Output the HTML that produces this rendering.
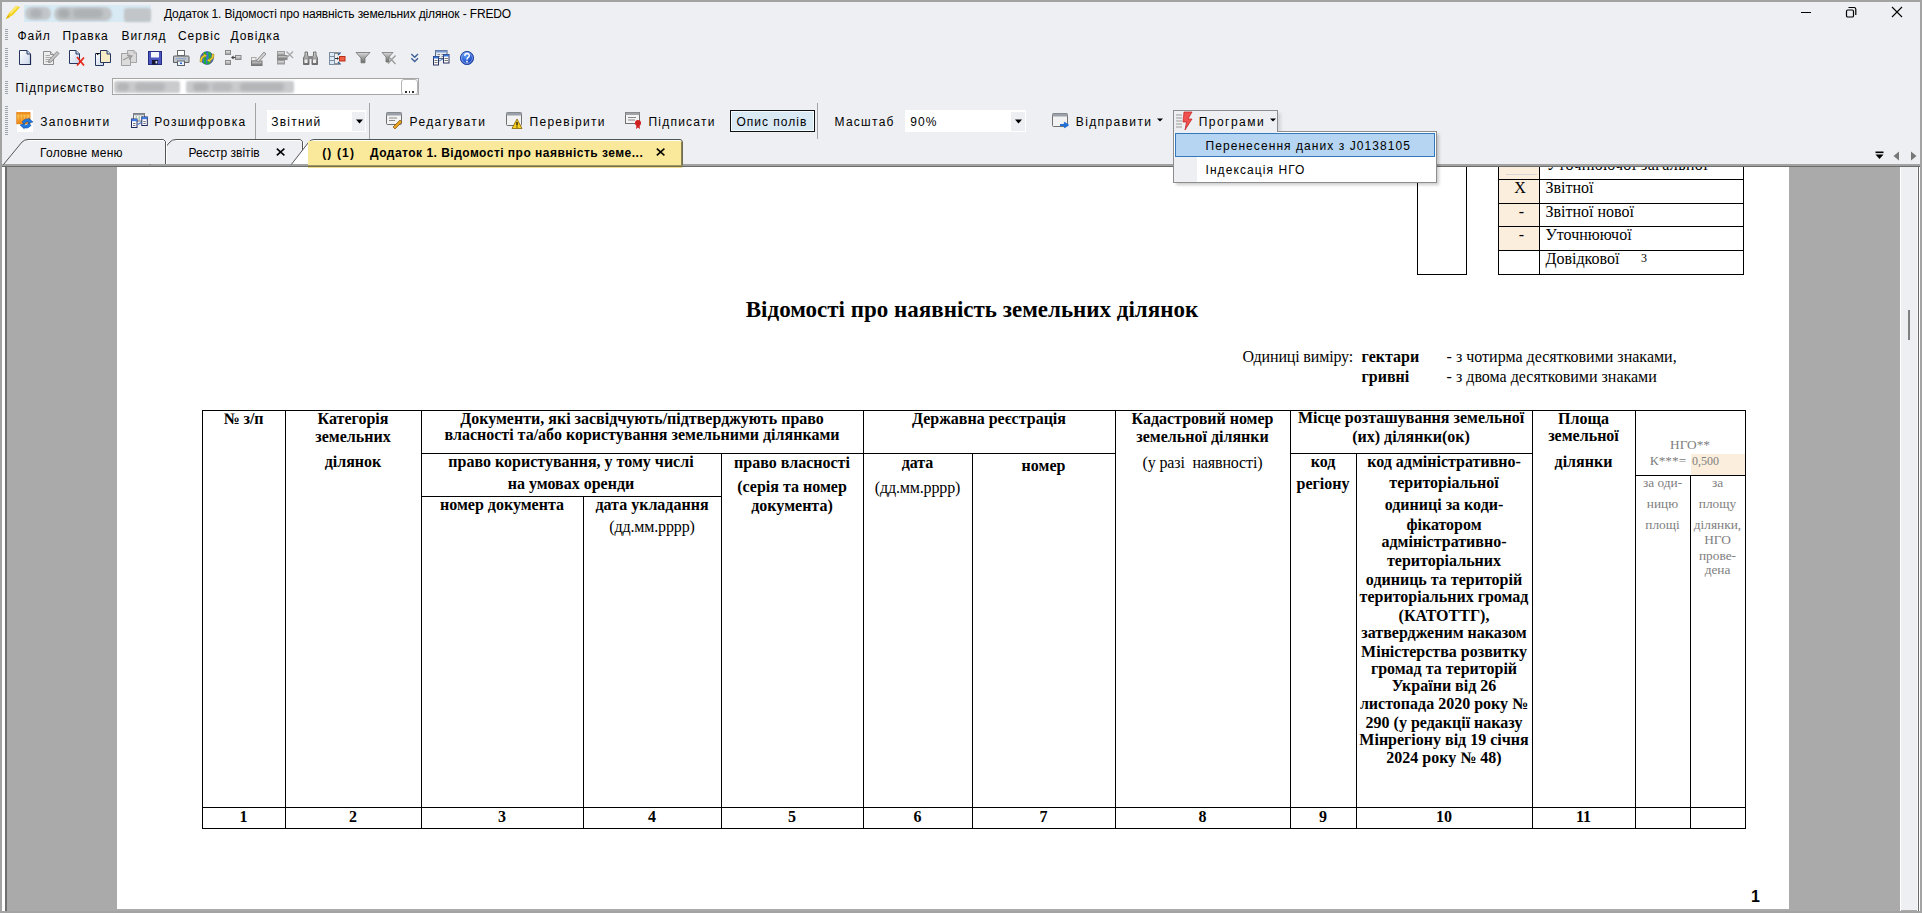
<!DOCTYPE html>
<html><head><meta charset="utf-8"><style>
html,body{margin:0;padding:0;width:1922px;height:913px;overflow:hidden;background:#eeeff2}
.r{position:absolute;box-sizing:border-box}
svg.r{overflow:visible}
.t{position:absolute;white-space:nowrap;line-height:1}
.clip{position:absolute;left:0;top:0;width:1922px;height:913px;clip-path:inset(167px 2px 4px 117px)}
</style></head><body>
<div class="r" style="left:0px;top:0px;width:1922px;height:913px;background:#eeeff2"></div>
<svg class="r" style="left:4px;top:4px;" width="17" height="17" viewBox="0 0 17 17"><path d="M2 15 L5 9 L12 2 L16 3 L9 11 Z" fill="#f2d21a"/><path d="M2 15 L6 13 L4 11 Z" fill="#e0b000"/><path d="M5 9 L12 2 L14 3 L7 10Z" fill="#ffe870"/></svg>
<div class="r" style="left:24px;top:5px;width:127px;height:17px;background:#d8ebf5"></div>
<div class="r" style="left:25px;top:7px;width:26px;height:13px;background:#c2c6c9;border-radius:6px;filter:blur(1.2px)"></div>
<div class="r" style="left:54px;top:6.5px;width:58px;height:14.5px;background:#c0c4c7;border-radius:7px;filter:blur(1.2px)"></div>
<div class="r" style="left:30px;top:9px;width:12px;height:9px;background:#aeb2b5;border-radius:5px;filter:blur(1.5px)"></div>
<div class="r" style="left:58px;top:9px;width:12px;height:9px;background:#a9adb0;border-radius:5px;filter:blur(1.5px)"></div>
<div class="r" style="left:73px;top:9px;width:30px;height:9px;background:#aeb2b5;border-radius:5px;filter:blur(1.5px)"></div>
<div class="r" style="left:124px;top:8px;width:27px;height:14px;background:#c2c6c8;border-radius:3px;filter:blur(1px)"></div>
<div class="t" style="left:164px;top:8.34px;font-size:12px;font-weight:400;color:#000;letter-spacing:-0.14px;font-family:'Liberation Sans', sans-serif;">Додаток 1. Відомості про наявність земельних ділянок - FREDO</div>
<div class="r" style="left:1801px;top:12px;width:10px;height:1px;background:#000"></div>
<svg class="r" style="left:1844px;top:6px;" width="14" height="13" viewBox="0 0 14 13"><rect x="2.5" y="4" width="7" height="7" rx="1.3" fill="none" stroke="#000" stroke-width="1.2"/><path d="M4.5 1.5 H10 Q11.8 1.5 11.8 3.3 V9" fill="none" stroke="#000" stroke-width="1.2"/></svg>
<svg class="r" style="left:1891px;top:6px;" width="12" height="12" viewBox="0 0 12 12"><path d="M1 1 L11 11 M11 1 L1 11" stroke="#000" stroke-width="1.1"/></svg>
<div class="r" style="left:5px;top:29px;width:3px;height:1px;background:#a0a4ac"></div>
<div class="r" style="left:5px;top:31px;width:3px;height:1px;background:#a0a4ac"></div>
<div class="r" style="left:5px;top:33px;width:3px;height:1px;background:#a0a4ac"></div>
<div class="r" style="left:5px;top:35px;width:3px;height:1px;background:#a0a4ac"></div>
<div class="r" style="left:5px;top:37px;width:3px;height:1px;background:#a0a4ac"></div>
<div class="r" style="left:5px;top:39px;width:3px;height:1px;background:#a0a4ac"></div>
<div class="r" style="left:5px;top:48px;width:3px;height:1px;background:#a0a4ac"></div>
<div class="r" style="left:5px;top:50px;width:3px;height:1px;background:#a0a4ac"></div>
<div class="r" style="left:5px;top:52px;width:3px;height:1px;background:#a0a4ac"></div>
<div class="r" style="left:5px;top:54px;width:3px;height:1px;background:#a0a4ac"></div>
<div class="r" style="left:5px;top:56px;width:3px;height:1px;background:#a0a4ac"></div>
<div class="r" style="left:5px;top:58px;width:3px;height:1px;background:#a0a4ac"></div>
<div class="r" style="left:5px;top:60px;width:3px;height:1px;background:#a0a4ac"></div>
<div class="r" style="left:5px;top:62px;width:3px;height:1px;background:#a0a4ac"></div>
<div class="r" style="left:5px;top:64px;width:3px;height:1px;background:#a0a4ac"></div>
<div class="r" style="left:5px;top:66px;width:3px;height:1px;background:#a0a4ac"></div>
<div class="r" style="left:5px;top:81px;width:3px;height:1px;background:#a0a4ac"></div>
<div class="r" style="left:5px;top:83px;width:3px;height:1px;background:#a0a4ac"></div>
<div class="r" style="left:5px;top:85px;width:3px;height:1px;background:#a0a4ac"></div>
<div class="r" style="left:5px;top:87px;width:3px;height:1px;background:#a0a4ac"></div>
<div class="r" style="left:5px;top:89px;width:3px;height:1px;background:#a0a4ac"></div>
<div class="r" style="left:5px;top:91px;width:3px;height:1px;background:#a0a4ac"></div>
<div class="r" style="left:5px;top:93px;width:3px;height:1px;background:#a0a4ac"></div>
<div class="r" style="left:5px;top:106px;width:3px;height:1px;background:#a0a4ac"></div>
<div class="r" style="left:5px;top:108px;width:3px;height:1px;background:#a0a4ac"></div>
<div class="r" style="left:5px;top:110px;width:3px;height:1px;background:#a0a4ac"></div>
<div class="r" style="left:5px;top:112px;width:3px;height:1px;background:#a0a4ac"></div>
<div class="r" style="left:5px;top:114px;width:3px;height:1px;background:#a0a4ac"></div>
<div class="r" style="left:5px;top:116px;width:3px;height:1px;background:#a0a4ac"></div>
<div class="r" style="left:5px;top:118px;width:3px;height:1px;background:#a0a4ac"></div>
<div class="r" style="left:5px;top:120px;width:3px;height:1px;background:#a0a4ac"></div>
<div class="r" style="left:5px;top:122px;width:3px;height:1px;background:#a0a4ac"></div>
<div class="r" style="left:5px;top:124px;width:3px;height:1px;background:#a0a4ac"></div>
<div class="r" style="left:5px;top:126px;width:3px;height:1px;background:#a0a4ac"></div>
<div class="r" style="left:5px;top:128px;width:3px;height:1px;background:#a0a4ac"></div>
<div class="r" style="left:5px;top:130px;width:3px;height:1px;background:#a0a4ac"></div>
<div class="r" style="left:5px;top:132px;width:3px;height:1px;background:#a0a4ac"></div>
<div class="r" style="left:5px;top:134px;width:3px;height:1px;background:#a0a4ac"></div>
<div class="t" style="left:17.5px;top:30.24px;font-size:12px;font-weight:400;color:#000;letter-spacing:0.95px;font-family:'Liberation Sans', sans-serif;">Файл</div>
<div class="t" style="left:62.5px;top:30.24px;font-size:12px;font-weight:400;color:#000;letter-spacing:0.95px;font-family:'Liberation Sans', sans-serif;">Правка</div>
<div class="t" style="left:121.5px;top:30.24px;font-size:12px;font-weight:400;color:#000;letter-spacing:0.95px;font-family:'Liberation Sans', sans-serif;">Вигляд</div>
<div class="t" style="left:178.0px;top:30.24px;font-size:12px;font-weight:400;color:#000;letter-spacing:0.95px;font-family:'Liberation Sans', sans-serif;">Сервіс</div>
<div class="t" style="left:230.5px;top:30.24px;font-size:12px;font-weight:400;color:#000;letter-spacing:0.95px;font-family:'Liberation Sans', sans-serif;">Довідка</div>
<svg class="r" style="left:0px;top:0px;" width="480" height="72" viewBox="0 0 480 72"><defs><linearGradient id="gd" x1="0" y1="0" x2="1" y2="1"><stop offset="0" stop-color="#fff"/><stop offset="1" stop-color="#c9d6ea"/></linearGradient><linearGradient id="gg" x1="0" y1="0" x2="0" y2="1"><stop offset="0" stop-color="#e8e8e8"/><stop offset="1" stop-color="#9a9a9a"/></linearGradient><linearGradient id="gf" x1="0" y1="0" x2="0" y2="1"><stop offset="0" stop-color="#d8d8d8"/><stop offset="1" stop-color="#6a6a6a"/></linearGradient></defs><path d="M19.5 50.5 H27.0 L30.5 54.0 V64.5 H19.5 Z" fill="url(#gd)" stroke="#27365f" stroke-width="1"/><path d="M27.0 50.5 V54.0 H30.5" fill="#c8dcf0" stroke="#27365f" stroke-width="1"/><path d="M20 64.5 H30.5 V55" stroke="#1c2850" stroke-width="1.2" fill="none"/><path d="M43.5 51.5 H50.5 L53.5 54.5 V64.5 H43.5 Z" fill="#eeeeee" stroke="#8c8c8c" stroke-width="1"/><path d="M50.5 51.5 V54.5 H53.5" fill="#ddd" stroke="#8c8c8c" stroke-width="1"/><path d="M45.5 55.5H50M45.5 57.5H51M45.5 59.5H49M45.5 61.5H50" stroke="#aaa" stroke-width="1"/><path d="M49 60 L57 51.5 L59 53.5 L51 62 L48.5 62.5Z" fill="#c4c4c4" stroke="#7c7c7c" stroke-width=".8"/><path d="M69.5 50.5 H76.0 L79.5 54.0 V63.5 H69.5 Z" fill="url(#gd)" stroke="#27365f" stroke-width="1"/><path d="M76.0 50.5 V54.0 H79.5" fill="#c8dcf0" stroke="#27365f" stroke-width="1"/><path d="M77 57 L84 65.5 M84 57.5 L77 65.5" stroke="#e8281a" stroke-width="1.8"/><path d="M95.5 53.5 H101.5 L103.5 55.5 V65.5 H95.5 Z" fill="url(#gd)" stroke="#27365f" stroke-width="1"/><path d="M101.5 53.5 V55.5 H103.5" fill="#c8dcf0" stroke="#27365f" stroke-width="1"/><path d="M96 53 H99.5 L97.7 55.3Z" fill="#000"/><path d="M100.5 50.5 H107.0 L110.5 54.0 V62.5 H100.5 Z" fill="#f8ecc6" stroke="#27365f" stroke-width="1"/><path d="M107.0 50.5 V54.0 H110.5" fill="#c8dcf0" stroke="#27365f" stroke-width="1"/><path d="M127.5 50.5 H134.0 L136.5 53.0 V62.5 H127.5 Z" fill="#d9d9d9" stroke="#a6a6a6" stroke-width="1"/><path d="M134.0 50.5 V53.0 H136.5" fill="#eee" stroke="#a6a6a6" stroke-width="1"/><path d="M121.5 53.5 H128.0 L130.5 56.0 V65.5 H121.5 Z" fill="#dcdcdc" stroke="#a0a0a0" stroke-width="1"/><path d="M128.0 53.5 V56.0 H130.5" fill="#eee" stroke="#a0a0a0" stroke-width="1"/><path d="M123 60 L131 56 M127 55.5 L132 56 L129 59.5" stroke="#9a9a9a" stroke-width="1.2" fill="none"/><rect x="148.5" y="51.5" width="13" height="13" fill="#4a55c0" stroke="#262d80"/><rect x="151" y="52" width="8" height="5.5" fill="#f4f6fb"/><rect x="152" y="60" width="6" height="4.5" fill="#151530"/><rect x="155.5" y="61" width="1.8" height="2.5" fill="#c8d8f0"/><rect x="177.5" y="50.5" width="7" height="5" fill="#fff" stroke="#6a6a6a"/><path d="M174 56 H188.5 Q189 56 189 57 V62.5 H173.5 V57 Q173.5 56 174 56Z" fill="#bfc2c6" stroke="#5e6266"/><rect x="177.5" y="61" width="7" height="4.5" fill="#eaf4ff" stroke="#5e6266"/><rect x="180" y="62.5" width="2" height="1.5" fill="#2a6ad0"/><rect x="176" y="58" width="10" height="1.2" fill="#8ea8d0"/><circle cx="207" cy="58" r="6.3" fill="#3a78d0" stroke="#1a3a80" stroke-width=".8"/><path d="M205 52 V64 M209 52 Q211 58 208 64" stroke="#1fb030" stroke-width="2.2" fill="none"/><path d="M200 62 Q199.5 57 204 55 L203 53.5 L207 55.5 L204 58 L204.5 56.5 Q201.5 58.5 202 62Z" fill="#f0d030" stroke="#a08010" stroke-width=".5"/><path d="M214 54 Q214.5 59 210 61 L211 62.5 L207 60.5 L210 58 L209.5 59.5 Q212.5 57.5 212 54Z" fill="#f0d030" stroke="#a08010" stroke-width=".5"/><rect x="225.5" y="50.5" width="5" height="4" fill="url(#gg)" stroke="#8a8a8a"/><rect x="225.5" y="60.5" width="5" height="4" fill="url(#gg)" stroke="#8a8a8a"/><rect x="235.5" y="55.5" width="5.5" height="4" fill="url(#gg)" stroke="#8a8a8a"/><path d="M233 57.5 H235.5" stroke="#444" stroke-width="1.2"/><path d="M231 57.5 L233.5 55.5 V59.5Z" fill="#444"/><rect x="251.5" y="57.5" width="4.5" height="3.5" fill="#eee" stroke="#aaa"/><rect x="251.5" y="61" width="10.5" height="4.5" fill="url(#gf)" stroke="#777"/><path d="M256.5 60.5 L264 52 L266 54 L258.5 62Z" fill="#cfcfcf" stroke="#7a7a7a" stroke-width=".8"/><rect x="277.5" y="51.5" width="7" height="3.5" fill="url(#gg)" stroke="#9a9a9a"/><rect x="277.5" y="55.5" width="9.5" height="4" fill="url(#gf)" stroke="#888"/><rect x="277.5" y="60.5" width="7" height="3.5" fill="url(#gg)" stroke="#9a9a9a"/><path d="M286.5 51.5 L293 58 M293 51.5 L287 57.5" stroke="#a8a8a8" stroke-width="1.3"/><path d="M303.5 58 L305 55 V52 H307.5 V55 L309 58 V64.5 H303.5Z" fill="url(#gf)" stroke="#666" stroke-width=".9"/><path d="M312 58 L313.5 55 V52 H316 V55 L317.5 58 V64.5 H312Z" fill="url(#gf)" stroke="#666" stroke-width=".9"/><rect x="309" y="56" width="3" height="3" fill="#888"/><rect x="304.5" y="59.5" width="3" height="3.5" fill="#eee"/><rect x="313" y="59.5" width="3" height="3.5" fill="#eee"/><rect x="329.5" y="52.5" width="5" height="12" fill="#dce9f5" stroke="#7d8da0"/><path d="M329.5 56.5H334.5M329.5 60.5H334.5" stroke="#7d8da0"/><path d="M335 53 H339 M335 64 H339" stroke="#333" stroke-width="1"/><path d="M340.5 52.5 L338 55 M340.5 64.5 L338 62" stroke="#2a5a90" stroke-width="1.4"/><path d="M335 58.5 H338" stroke="#333" stroke-width="1"/><path d="M339 58.5 L337 57 V60Z" fill="#333"/><rect x="339.5" y="56.5" width="5.5" height="4.5" fill="#f06048" stroke="#b83018"/><path d="M356 52.5 H370 L365 58 V62.8 H361 V58Z" fill="url(#gf)" stroke="#707070" stroke-width=".8"/><path d="M382 52.5 H393 L389 57 V62 H386 V57Z" fill="url(#gf)" stroke="#777" stroke-width=".8"/><path d="M388 56 L395.5 64 M395.5 55.5 L388 63.5" stroke="#9a9a9a" stroke-width="1.3"/><path d="M411.3 54 L414.7 57.2 L418 54 M411.3 58.3 L414.7 61.5 L418 58.3" stroke="#3d5f98" stroke-width="1.4" fill="none"/><rect x="435.5" y="50.5" width="11.5" height="8" fill="#e6ebf2" stroke="#55657e"/><rect x="435.5" y="50.5" width="11.5" height="2" fill="#7a9ad0"/><path d="M437.5 54.5H440M441.5 54.5H444M437.5 56.5H440M441.5 56.5H444" stroke="#888"/><rect x="433.5" y="56.5" width="5" height="8.5" fill="#fff" stroke="#2a3360"/><rect x="433.5" y="56.5" width="5" height="2" fill="#3a78d8"/><rect x="443.5" y="54.5" width="5.5" height="8.5" fill="#fff" stroke="#2a3360"/><rect x="443.5" y="54.5" width="5.5" height="2" fill="#3a78d8"/><path d="M434.5 60.5H437.5M434.5 62.5H437.5M444.5 58.5H448M444.5 60.5H448" stroke="#777"/><path d="M439 61 L443 59" stroke="#4a80c8" stroke-width="1"/><defs><radialGradient id="hg" cx=".4" cy=".35" r=".7"><stop offset="0" stop-color="#5a9af8"/><stop offset="1" stop-color="#0a2fb0"/></radialGradient></defs><circle cx="467" cy="58" r="6.6" fill="url(#hg)" stroke="#2a4aa0" stroke-width="1"/><circle cx="467" cy="58" r="5.4" fill="none" stroke="#b8d0ff" stroke-width=".6"/><path d="M464.7 55.8 Q465 53.6 467.1 53.6 Q469.4 53.7 469.3 55.7 Q469.2 57 467.6 57.8 Q467 58.2 467 59.6" stroke="#fff" stroke-width="1.5" fill="none"/><rect x="466.2" y="60.8" width="1.6" height="1.6" fill="#fff"/></svg>
<div class="t" style="left:15.5px;top:81.84px;font-size:12px;font-weight:400;color:#000;letter-spacing:1.05px;font-family:'Liberation Sans', sans-serif;">Підприємство</div>
<div class="r" style="left:112px;top:78px;width:307px;height:17px;background:#fff;border:1px solid #a6a6a6"></div>
<div class="r" style="left:114px;top:81px;width:66px;height:12px;background:#c9cbcd;border-radius:2px;filter:blur(1px)"></div>
<div class="r" style="left:186px;top:81px;width:108px;height:12px;background:#c9cbcd;border-radius:2px;filter:blur(1px)"></div>
<div class="r" style="left:117px;top:83px;width:12px;height:8px;background:#b3b5b7;border-radius:4px;filter:blur(1.5px)"></div>
<div class="r" style="left:135px;top:83px;width:30px;height:8px;background:#b5b7b9;border-radius:4px;filter:blur(1.5px)"></div>
<div class="r" style="left:193px;top:83px;width:16px;height:8px;background:#b0b2b4;border-radius:4px;filter:blur(1.5px)"></div>
<div class="r" style="left:212px;top:83px;width:20px;height:8px;background:#b8babc;border-radius:4px;filter:blur(1.5px)"></div>
<div class="r" style="left:240px;top:83px;width:44px;height:8px;background:#b3b5b7;border-radius:4px;filter:blur(1.5px)"></div>
<div class="r" style="left:401px;top:79px;width:17px;height:16px;background:#fff;border:1px solid #b4b4b4;border-radius:3px"></div>
<div class="r" style="left:405px;top:91px;width:1.5px;height:1.5px;background:#333"></div>
<div class="r" style="left:408.5px;top:91px;width:1.5px;height:1.5px;background:#333"></div>
<div class="r" style="left:412px;top:91px;width:1.5px;height:1.5px;background:#333"></div>
<div class="r" style="left:255px;top:103px;width:1px;height:36px;background:#a4a4a4"></div>
<div class="r" style="left:369px;top:103px;width:1px;height:36px;background:#a4a4a4"></div>
<div class="r" style="left:817px;top:103px;width:1px;height:36px;background:#a4a4a4"></div>
<div class="r" style="left:17px;top:110px;width:16px;height:22px;background:#fff"></div>
<svg class="r" style="left:12px;top:106px;" width="24" height="30" viewBox="0 0 24 30"><defs><linearGradient id="zo" x1="0" y1="0" x2="0" y2="1"><stop offset="0" stop-color="#fde070"/><stop offset="1" stop-color="#f08010"/></linearGradient></defs><rect x="4.8" y="6.5" width="13.2" height="11.3" fill="url(#zo)" stroke="#e07a10" stroke-width=".8"/><rect x="4.8" y="6.5" width="13.2" height="2.2" fill="#f09020"/><path d="M8 9V17.5M11 9V17.5M14 9V17.5" stroke="#e8901a" stroke-width="1"/><path d="M10 16 Q13 11.5 17.5 13.5 L16.5 12 L21 16 L16 17.5 L17 16 Q13.5 15 12 18Z" fill="#1e78e0" stroke="#0a4aa0" stroke-width=".5"/><path d="M19 19.5 Q16 23.5 11.5 21.5 L12.5 23 L8 19 L13 17.5 L12 19 Q15.5 20 17 17Z" fill="#1e78e0" stroke="#0a4aa0" stroke-width=".5"/></svg>
<div class="t" style="left:40.3px;top:115.84px;font-size:12px;font-weight:400;color:#000;letter-spacing:1.25px;font-family:'Liberation Sans', sans-serif;">Заповнити</div>
<svg class="r" style="left:125px;top:106px;" width="30" height="30" viewBox="0 0 30 30"><rect x="8.5" y="7.5" width="11" height="7.5" fill="#f6f8fa" stroke="#707478"/><rect x="8.5" y="7.5" width="11" height="1.8" fill="#8a9098"/><path d="M10.5 11H12M13.5 11H15M16.5 11H18M13.5 13H15" stroke="#6a9a6a" stroke-width="1"/><rect x="6.5" y="13" width="5.5" height="8.5" fill="#fff" stroke="#1f2a60"/><rect x="6.5" y="13" width="5.5" height="2.2" fill="#3f78e0"/><path d="M8 17.5H10.5M8 19.5H10.5" stroke="#778"/><rect x="16.8" y="11" width="5.5" height="8.5" fill="#fff" stroke="#1f2a60"/><rect x="16.8" y="11" width="5.5" height="2.2" fill="#3f78e0"/><path d="M18.3 15.5H20.8M18.3 17.5H20.8" stroke="#778"/><path d="M12.5 18.5 L16.5 16.5" stroke="#3a70c8" stroke-width="1.2"/></svg>
<div class="t" style="left:154.3px;top:115.84px;font-size:12px;font-weight:400;color:#000;letter-spacing:1.33px;font-family:'Liberation Sans', sans-serif;">Розшифровка</div>
<div class="r" style="left:267px;top:110px;width:99px;height:22px;background:#fff"></div>
<div class="r" style="left:352px;top:112px;width:13px;height:19px;background:#eeeff2"></div>
<svg class="r" style="left:355px;top:118.5px;" width="9" height="6" viewBox="0 0 9 6"><path d="M1 0.5 H8 L4.5 4.5Z" fill="#000"/></svg>
<div class="t" style="left:271.3px;top:115.84px;font-size:12px;font-weight:400;color:#000;letter-spacing:1.2px;font-family:'Liberation Sans', sans-serif;">Звітний</div>
<svg class="r" style="left:386px;top:112px;" width="16" height="17" viewBox="0 0 16 17"><rect x="0.5" y="0.5" width="15" height="12" rx="1" fill="#f2f2f2" stroke="#707070"/><rect x="0.5" y="0.5" width="15" height="3" fill="#9aa0a8"/><path d="M3 6H11M3 8.5H9" stroke="#888"/><path d="M7 15 L14 8 L16 10 L9 17Z" fill="#e8a020" stroke="#805010" stroke-width=".7"/></svg>
<div class="t" style="left:409.5px;top:115.84px;font-size:12px;font-weight:400;color:#000;letter-spacing:1.4px;font-family:'Liberation Sans', sans-serif;">Редагувати</div>
<svg class="r" style="left:506px;top:112px;" width="16" height="17" viewBox="0 0 16 17"><rect x="0.5" y="0.5" width="15" height="13" rx="1" fill="#f2f2f2" stroke="#707070"/><rect x="0.5" y="0.5" width="15" height="3" fill="#9aa0a8"/><path d="M11 7 L16 16.5 H6Z" fill="#f8d020" stroke="#806000" stroke-width=".8"/><path d="M11 10V13.5M11 14.5V15.5" stroke="#000" stroke-width="1.2"/></svg>
<div class="t" style="left:529.5px;top:115.84px;font-size:12px;font-weight:400;color:#000;letter-spacing:1.3px;font-family:'Liberation Sans', sans-serif;">Перевірити</div>
<svg class="r" style="left:625px;top:112px;" width="17" height="17" viewBox="0 0 17 17"><rect x="0.5" y="0.5" width="14" height="11" fill="#f4f4f4" stroke="#707070"/><rect x="0.5" y="0.5" width="14" height="2.5" fill="#a0a4a8"/><path d="M3 5.5H11M3 8H10" stroke="#888"/><circle cx="13" cy="11" r="3" fill="#d02020"/><path d="M11.5 13 L11 17 L13 15.5 L15 17 L14.5 13Z" fill="#d02020"/></svg>
<div class="t" style="left:648.5px;top:115.84px;font-size:12px;font-weight:400;color:#000;letter-spacing:1.22px;font-family:'Liberation Sans', sans-serif;">Підписати</div>
<div class="r" style="left:730px;top:110px;width:85px;height:22px;background:#d9eaf5;border:1px solid #111;box-shadow:inset 0 0 0 1px #f4fbff;box-sizing:border-box"></div>
<div class="t" style="left:736.5px;top:115.84px;font-size:12px;font-weight:400;color:#000;letter-spacing:1.0px;font-family:'Liberation Sans', sans-serif;">Опис полів</div>
<div class="t" style="left:834.5px;top:115.84px;font-size:12px;font-weight:400;color:#000;letter-spacing:1.27px;font-family:'Liberation Sans', sans-serif;">Масштаб</div>
<div class="r" style="left:905px;top:110px;width:121px;height:22px;background:#fff"></div>
<div class="r" style="left:1011px;top:112px;width:14px;height:19px;background:#eeeff2"></div>
<svg class="r" style="left:1014px;top:118.5px;" width="9" height="6" viewBox="0 0 9 6"><path d="M1 0.5 H8 L4.5 4.5Z" fill="#000"/></svg>
<div class="t" style="left:910.3px;top:115.84px;font-size:12px;font-weight:400;color:#000;letter-spacing:1.1px;font-family:'Liberation Sans', sans-serif;">90%</div>
<svg class="r" style="left:1052px;top:113px;" width="18" height="17" viewBox="0 0 18 17"><rect x="0.5" y="0.5" width="15" height="13" rx="1" fill="#f2f2f2" stroke="#707070"/><rect x="0.5" y="0.5" width="15" height="3" fill="#9aa0a8"/><path d="M8 12 H14 M12 9.5 L15.5 12 L12 14.5" stroke="#2070d8" stroke-width="2" fill="none"/></svg>
<div class="t" style="left:1075.8px;top:115.84px;font-size:12px;font-weight:400;color:#000;letter-spacing:1.38px;font-family:'Liberation Sans', sans-serif;">Відправити</div>
<svg class="r" style="left:1157px;top:118px;" width="6" height="4" viewBox="0 0 6 4"><path d="M0 0.5H6L3 3.5Z" fill="#000"/></svg>
<div class="r" style="left:1176px;top:113px;width:105px;height:22px;background:rgba(0,0,0,.10);filter:blur(1.5px)"></div>
<div class="r" style="left:1173px;top:110px;width:105px;height:23px;background:#eeeff2;border:1px solid #8d8d8d;border-bottom:none;box-sizing:border-box"></div>
<svg class="r" style="left:1175px;top:111px;" width="19" height="20" viewBox="0 0 19 20"><path d="M1 4H7M1 7H7M1 10H7M1 13H7M1 16H7" stroke="#b8b8b8" stroke-width="1.6"/><path d="M9 1 L17 1 L13 8 L17 8 L10 19 L11.5 11 L8 11Z" fill="#f05050" stroke="#c02020" stroke-width=".7"/></svg>
<div class="t" style="left:1198.8px;top:115.84px;font-size:12px;font-weight:400;color:#000;letter-spacing:1.45px;font-family:'Liberation Sans', sans-serif;">Програми</div>
<svg class="r" style="left:1270px;top:118px;" width="6" height="4" viewBox="0 0 6 4"><path d="M0 0.5H6L3 3.5Z" fill="#000"/></svg>
<div class="r" style="left:2px;top:167px;width:1918px;height:744px;background:#a9aaa9"></div>
<div class="r" style="left:2px;top:166px;width:3px;height:745px;background:#fff"></div>
<div class="r" style="left:5px;top:166px;width:1.5px;height:745px;background:#6e6e6e"></div>
<div class="r" style="left:117px;top:167px;width:1672px;height:742px;background:#fff"></div>
<div class="r" style="left:1900px;top:167px;width:1px;height:744px;background:#fff"></div>
<div class="r" style="left:1901px;top:167px;width:16px;height:743px;background:#eeeff2"></div>
<div class="r" style="left:1917px;top:167px;width:1px;height:744px;background:#f8f8f8"></div>
<div class="r" style="left:1918px;top:167px;width:1px;height:744px;background:#6a6a6a"></div>
<div class="r" style="left:1919px;top:167px;width:1px;height:744px;background:#fff"></div>
<div class="r" style="left:1908px;top:310px;width:2px;height:30px;background:#808080"></div>
<div class="r" style="left:0px;top:0px;width:1922px;height:2px;background:#a3a3a3"></div>
<div class="r" style="left:0px;top:0px;width:2px;height:913px;background:#a3a3a3"></div>
<div class="r" style="left:1920px;top:0px;width:2px;height:913px;background:#a3a3a3"></div>
<div class="r" style="left:0px;top:911px;width:1922px;height:2px;background:#a3a3a3"></div>
<div class="r" style="left:2px;top:164px;width:1918px;height:2px;background:#a2a2a2"></div>
<svg class="r" style="left:0px;top:134px;" width="700" height="40" viewBox="0 0 700 40"><path d="M150.4 30 L170 8 Q172 5.5 176 5.5 H300.5 L302.5 7.5 V30 Z" fill="#eeeff2"/><path d="M150 30.5 L170 8 Q172 5.5 176 5.5 H300.5 L302.5 7.5 V30" fill="none" stroke="#555" stroke-width="1"/><path d="M176 6.5 H300" stroke="#fff" stroke-width="1"/><path d="M303.5 8 V30" stroke="#fff" stroke-width="1"/><path d="M3.9 30 L22 8 Q24.5 5.5 28 5.5 H163.5 L165.5 7.5 V30 Z" fill="#eeeff2"/><path d="M3.5 30.5 L22 8 Q24.5 5.5 28 5.5 H163.5 L165.5 7.5 V30" fill="none" stroke="#555" stroke-width="1"/><path d="M28 6.5 H163" stroke="#fff" stroke-width="1"/><path d="M166.5 8 V30" stroke="#fff" stroke-width="1"/><path d="M291.7 30 L309 7.8 Q311 5.5 314 5.5 H680 Q682.2 5.5 682.2 7.8 V30 Z" fill="#fff"/><path d="M291.3 30.5 L309 7.8 Q311 5.5 314 5.5 H680 Q682.2 5.5 682.2 7.8 V30" fill="none" stroke="#555" stroke-width="1"/><rect x="308" y="7" width="374" height="27" fill="#fbe99b"/><path d="M682 7.5 V31" stroke="#6b6843" stroke-width="1.6"/><rect x="308" y="31.3" width="375" height="1.8" fill="#77714a"/></svg>
<div class="r" style="left:2px;top:166px;width:306px;height:1px;background:#6b6d6b"></div>
<div class="r" style="left:683px;top:166px;width:1237px;height:1px;background:#6b6d6b"></div>
<div class="t" style="left:40px;top:146.84px;font-size:12px;font-weight:400;color:#000;letter-spacing:0.28px;font-family:'Liberation Sans', sans-serif;">Головне меню</div>
<div class="t" style="left:188.6px;top:146.84px;font-size:12px;font-weight:400;color:#000;letter-spacing:0.02px;font-family:'Liberation Sans', sans-serif;">Реєстр звітів</div>
<svg class="r" style="left:268px;top:142px;" width="24" height="20" viewBox="0 0 24 20"><path d="M8.8 6.6 L16.4 13.4 M16.4 6.6 L8.8 13.4" stroke="#000" stroke-width="1.5"/></svg>
<div class="t" style="left:322.2px;top:146.84px;font-size:12px;font-weight:700;color:#000;letter-spacing:1.15px;font-family:'Liberation Sans', sans-serif;">() (1)</div>
<div class="t" style="left:370px;top:146.84px;font-size:12px;font-weight:700;color:#000;letter-spacing:0.48px;font-family:'Liberation Sans', sans-serif;">Додаток 1. Відомості про наявність земе...</div>
<svg class="r" style="left:648px;top:142px;" width="24" height="20" viewBox="0 0 24 20"><path d="M8.8 6.6 L16.4 13.4 M16.4 6.6 L8.8 13.4" stroke="#000" stroke-width="1.5"/></svg>
<svg class="r" style="left:1875px;top:151px;" width="9" height="9" viewBox="0 0 9 9"><rect x="0.5" y="0.5" width="8" height="1.6" fill="#000"/><path d="M0.5 3.5 H8.5 L4.5 8Z" fill="#000"/></svg>
<svg class="r" style="left:1893px;top:151px;" width="7" height="10" viewBox="0 0 7 10"><path d="M6 0.5 V9.5 L0.5 5Z" fill="#777"/></svg>
<svg class="r" style="left:1910px;top:151px;" width="7" height="10" viewBox="0 0 7 10"><path d="M1 0.5 V9.5 L6.5 5Z" fill="#777"/></svg>
<div class="clip">
<div class="r" style="left:1417px;top:167px;width:1px;height:108px;background:#000"></div>
<div class="r" style="left:1466px;top:167px;width:1px;height:108px;background:#000"></div>
<div class="r" style="left:1417px;top:274px;width:50px;height:1px;background:#000"></div>
<div class="r" style="left:1499px;top:167px;width:40px;height:83px;background:#fbeedc"></div>
<div class="r" style="left:1498px;top:167px;width:1px;height:108px;background:#000"></div>
<div class="r" style="left:1539px;top:167px;width:1px;height:108px;background:#000"></div>
<div class="r" style="left:1743px;top:167px;width:1px;height:108px;background:#000"></div>
<div class="r" style="left:1498px;top:179px;width:246px;height:1px;background:#000"></div>
<div class="r" style="left:1498px;top:203px;width:246px;height:1px;background:#000"></div>
<div class="r" style="left:1498px;top:226px;width:246px;height:1px;background:#000"></div>
<div class="r" style="left:1498px;top:250px;width:246px;height:1px;background:#000"></div>
<div class="r" style="left:1498px;top:274px;width:246px;height:1px;background:#000"></div>
<div class="r" style="left:1506px;top:174px;width:31px;height:1px;background:#d8d8d8"></div>
<div class="t" style="left:1546.5px;top:157.10px;font-size:16px;font-weight:400;color:#000;letter-spacing:0.4px;font-family:'Liberation Serif', serif;">Уточнюючої загальної</div>
<div class="t" style="left:1120px;width:800px;text-align:center;top:180.10px;font-size:16px;font-weight:400;color:#000;letter-spacing:0px;font-family:'Liberation Serif', serif;">X</div>
<div class="t" style="left:1545.5px;top:180.10px;font-size:16px;font-weight:400;color:#000;letter-spacing:0px;font-family:'Liberation Serif', serif;">Звітної</div>
<div class="t" style="left:1121.5px;width:800px;text-align:center;top:204.10px;font-size:16px;font-weight:400;color:#000;letter-spacing:0px;font-family:'Liberation Serif', serif;">-</div>
<div class="t" style="left:1545.5px;top:204.10px;font-size:16px;font-weight:400;color:#000;letter-spacing:0px;font-family:'Liberation Serif', serif;">Звітної нової</div>
<div class="t" style="left:1121.5px;width:800px;text-align:center;top:227.10px;font-size:16px;font-weight:400;color:#000;letter-spacing:0px;font-family:'Liberation Serif', serif;">-</div>
<div class="t" style="left:1545.5px;top:227.10px;font-size:16px;font-weight:400;color:#000;letter-spacing:0px;font-family:'Liberation Serif', serif;">Уточнюючої</div>
<div class="t" style="left:1545.5px;top:250.60px;font-size:16px;font-weight:400;color:#000;letter-spacing:0px;font-family:'Liberation Serif', serif;">Довідкової</div>
<div class="t" style="left:1641px;top:251.95px;font-size:12px;font-weight:400;color:#000;letter-spacing:0px;font-family:'Liberation Serif', serif;">3</div>
<div class="t" style="left:572px;width:800px;text-align:center;top:298.04px;font-size:23px;font-weight:700;color:#000;letter-spacing:0px;font-family:'Liberation Serif', serif;">Відомості про наявність земельних ділянок</div>
<div class="t" style="left:1242.4px;top:348.60px;font-size:16px;font-weight:400;color:#000;letter-spacing:-0.15px;font-family:'Liberation Serif', serif;">Одиниці виміру:</div>
<div class="t" style="left:1361.6px;top:348.60px;font-size:16px;font-weight:700;color:#000;letter-spacing:0px;font-family:'Liberation Serif', serif;">гектари</div>
<div class="t" style="left:1446.6px;top:348.60px;font-size:16px;font-weight:400;color:#000;letter-spacing:0px;font-family:'Liberation Serif', serif;">- з чотирма десятковими знаками,</div>
<div class="t" style="left:1361.6px;top:369.20px;font-size:16px;font-weight:700;color:#000;letter-spacing:0px;font-family:'Liberation Serif', serif;">гривні</div>
<div class="t" style="left:1446.6px;top:369.20px;font-size:16px;font-weight:400;color:#000;letter-spacing:0px;font-family:'Liberation Serif', serif;">- з двома десятковими знаками</div>
<div class="r" style="left:202px;top:410px;width:1px;height:419px;background:#000"></div>
<div class="r" style="left:285px;top:410px;width:1px;height:419px;background:#000"></div>
<div class="r" style="left:421px;top:410px;width:1px;height:419px;background:#000"></div>
<div class="r" style="left:583px;top:496px;width:1px;height:333px;background:#000"></div>
<div class="r" style="left:721px;top:453px;width:1px;height:376px;background:#000"></div>
<div class="r" style="left:863px;top:410px;width:1px;height:419px;background:#000"></div>
<div class="r" style="left:972px;top:453px;width:1px;height:376px;background:#000"></div>
<div class="r" style="left:1115px;top:410px;width:1px;height:419px;background:#000"></div>
<div class="r" style="left:1290px;top:410px;width:1px;height:419px;background:#000"></div>
<div class="r" style="left:1356px;top:453px;width:1px;height:376px;background:#000"></div>
<div class="r" style="left:1532px;top:410px;width:1px;height:419px;background:#000"></div>
<div class="r" style="left:1635px;top:410px;width:1px;height:419px;background:#000"></div>
<div class="r" style="left:1690px;top:475px;width:1px;height:354px;background:#000"></div>
<div class="r" style="left:1745px;top:410px;width:1px;height:419px;background:#000"></div>
<div class="r" style="left:202px;top:410px;width:1544px;height:1px;background:#000"></div>
<div class="r" style="left:421px;top:453px;width:695px;height:1px;background:#000"></div>
<div class="r" style="left:1290px;top:453px;width:243px;height:1px;background:#000"></div>
<div class="r" style="left:421px;top:496px;width:301px;height:1px;background:#000"></div>
<div class="r" style="left:1635px;top:475px;width:111px;height:1px;background:#000"></div>
<div class="r" style="left:202px;top:807px;width:1544px;height:1px;background:#000"></div>
<div class="r" style="left:202px;top:828px;width:1544px;height:1px;background:#000"></div>
<div class="r" style="left:1691px;top:454px;width:54px;height:21px;background:#fbeedc"></div>
<div class="t" style="left:-156.5px;width:800px;text-align:center;top:411.30px;font-size:16px;font-weight:700;color:#000;letter-spacing:0px;font-family:'Liberation Serif', serif;">№ з/п</div>
<div class="t" style="left:-47.0px;width:800px;text-align:center;top:410.90px;font-size:16px;font-weight:700;color:#000;letter-spacing:0px;font-family:'Liberation Serif', serif;">Категорія</div>
<div class="t" style="left:-47.0px;width:800px;text-align:center;top:428.60px;font-size:16px;font-weight:700;color:#000;letter-spacing:0px;font-family:'Liberation Serif', serif;">земельних</div>
<div class="t" style="left:-47.0px;width:800px;text-align:center;top:454.30px;font-size:16px;font-weight:700;color:#000;letter-spacing:0px;font-family:'Liberation Serif', serif;">ділянок</div>
<div class="t" style="left:242.0px;width:800px;text-align:center;top:410.50px;font-size:16px;font-weight:700;color:#000;letter-spacing:0px;font-family:'Liberation Serif', serif;">Документи, які засвідчують/підтверджують право</div>
<div class="t" style="left:242.0px;width:800px;text-align:center;top:427.30px;font-size:16px;font-weight:700;color:#000;letter-spacing:0px;font-family:'Liberation Serif', serif;">власності та/або користування земельними ділянками</div>
<div class="t" style="left:171.0px;width:800px;text-align:center;top:454.00px;font-size:16px;font-weight:700;color:#000;letter-spacing:0px;font-family:'Liberation Serif', serif;">право користування, у тому числі</div>
<div class="t" style="left:171.0px;width:800px;text-align:center;top:475.90px;font-size:16px;font-weight:700;color:#000;letter-spacing:0px;font-family:'Liberation Serif', serif;">на умовах оренди</div>
<div class="t" style="left:102.0px;width:800px;text-align:center;top:497.00px;font-size:16px;font-weight:700;color:#000;letter-spacing:0px;font-family:'Liberation Serif', serif;">номер документа</div>
<div class="t" style="left:252.0px;width:800px;text-align:center;top:497.00px;font-size:16px;font-weight:700;color:#000;letter-spacing:0px;font-family:'Liberation Serif', serif;">дата укладання</div>
<div class="t" style="left:252.0px;width:800px;text-align:center;top:518.60px;font-size:16px;font-weight:400;color:#000;letter-spacing:-0.15px;font-family:'Liberation Serif', serif;">(дд.мм.рррр)</div>
<div class="t" style="left:392.0px;width:800px;text-align:center;top:455.30px;font-size:16px;font-weight:700;color:#000;letter-spacing:0px;font-family:'Liberation Serif', serif;">право власності</div>
<div class="t" style="left:392.0px;width:800px;text-align:center;top:478.60px;font-size:16px;font-weight:700;color:#000;letter-spacing:0px;font-family:'Liberation Serif', serif;">(серія та номер</div>
<div class="t" style="left:392.0px;width:800px;text-align:center;top:497.60px;font-size:16px;font-weight:700;color:#000;letter-spacing:0px;font-family:'Liberation Serif', serif;">документа)</div>
<div class="t" style="left:589.0px;width:800px;text-align:center;top:411.00px;font-size:16px;font-weight:700;color:#000;letter-spacing:0px;font-family:'Liberation Serif', serif;">Державна реєстрація</div>
<div class="t" style="left:517.5px;width:800px;text-align:center;top:455.30px;font-size:16px;font-weight:700;color:#000;letter-spacing:0px;font-family:'Liberation Serif', serif;">дата</div>
<div class="t" style="left:517.5px;width:800px;text-align:center;top:479.60px;font-size:16px;font-weight:400;color:#000;letter-spacing:-0.15px;font-family:'Liberation Serif', serif;">(дд.мм.рррр)</div>
<div class="t" style="left:643.5px;width:800px;text-align:center;top:457.90px;font-size:16px;font-weight:700;color:#000;letter-spacing:0px;font-family:'Liberation Serif', serif;">номер</div>
<div class="t" style="left:802.5px;width:800px;text-align:center;top:411.00px;font-size:16px;font-weight:700;color:#000;letter-spacing:0px;font-family:'Liberation Serif', serif;">Кадастровий номер</div>
<div class="t" style="left:802.5px;width:800px;text-align:center;top:428.80px;font-size:16px;font-weight:700;color:#000;letter-spacing:0px;font-family:'Liberation Serif', serif;">земельної ділянки</div>
<div class="t" style="left:802.5px;width:800px;text-align:center;top:454.60px;font-size:16px;font-weight:400;color:#000;letter-spacing:-0.15px;font-family:'Liberation Serif', serif;">(у разі&nbsp; наявності)</div>
<div class="t" style="left:1011.0px;width:800px;text-align:center;top:410.40px;font-size:16px;font-weight:700;color:#000;letter-spacing:0px;font-family:'Liberation Serif', serif;">Місце розташування земельної</div>
<div class="t" style="left:1011.0px;width:800px;text-align:center;top:429.10px;font-size:16px;font-weight:700;color:#000;letter-spacing:0px;font-family:'Liberation Serif', serif;">(их) ділянки(ок)</div>
<div class="t" style="left:923.0px;width:800px;text-align:center;top:454.10px;font-size:16px;font-weight:700;color:#000;letter-spacing:0px;font-family:'Liberation Serif', serif;">код</div>
<div class="t" style="left:923.0px;width:800px;text-align:center;top:476.10px;font-size:16px;font-weight:700;color:#000;letter-spacing:0px;font-family:'Liberation Serif', serif;">регіону</div>
<div class="t" style="left:1044.0px;width:800px;text-align:center;top:454.10px;font-size:16px;font-weight:700;color:#000;letter-spacing:0px;font-family:'Liberation Serif', serif;">код адміністративно-</div>
<div class="t" style="left:1044.0px;width:800px;text-align:center;top:475.40px;font-size:16px;font-weight:700;color:#000;letter-spacing:0px;font-family:'Liberation Serif', serif;">територіальної</div>
<div class="t" style="left:1044.0px;width:800px;text-align:center;top:496.60px;font-size:16px;font-weight:700;color:#000;letter-spacing:0px;font-family:'Liberation Serif', serif;">одиниці за коди-</div>
<div class="t" style="left:1044.0px;width:800px;text-align:center;top:516.60px;font-size:16px;font-weight:700;color:#000;letter-spacing:0px;font-family:'Liberation Serif', serif;">фікатором</div>
<div class="t" style="left:1044.0px;width:800px;text-align:center;top:534.10px;font-size:16px;font-weight:700;color:#000;letter-spacing:0px;font-family:'Liberation Serif', serif;">адміністративно-</div>
<div class="t" style="left:1044.0px;width:800px;text-align:center;top:552.60px;font-size:16px;font-weight:700;color:#000;letter-spacing:0px;font-family:'Liberation Serif', serif;">територіальних</div>
<div class="t" style="left:1044.0px;width:800px;text-align:center;top:571.60px;font-size:16px;font-weight:700;color:#000;letter-spacing:0px;font-family:'Liberation Serif', serif;">одиниць та територій</div>
<div class="t" style="left:1044.0px;width:800px;text-align:center;top:589.40px;font-size:16px;font-weight:700;color:#000;letter-spacing:0px;font-family:'Liberation Serif', serif;">територіальних громад</div>
<div class="t" style="left:1044.0px;width:800px;text-align:center;top:607.90px;font-size:16px;font-weight:700;color:#000;letter-spacing:0px;font-family:'Liberation Serif', serif;">(КАТОТТГ),</div>
<div class="t" style="left:1044.0px;width:800px;text-align:center;top:625.00px;font-size:16px;font-weight:700;color:#000;letter-spacing:0px;font-family:'Liberation Serif', serif;">затвердженим наказом</div>
<div class="t" style="left:1044.0px;width:800px;text-align:center;top:643.60px;font-size:16px;font-weight:700;color:#000;letter-spacing:0px;font-family:'Liberation Serif', serif;">Міністерства розвитку</div>
<div class="t" style="left:1044.0px;width:800px;text-align:center;top:660.60px;font-size:16px;font-weight:700;color:#000;letter-spacing:0px;font-family:'Liberation Serif', serif;">громад та територій</div>
<div class="t" style="left:1044.0px;width:800px;text-align:center;top:677.60px;font-size:16px;font-weight:700;color:#000;letter-spacing:0px;font-family:'Liberation Serif', serif;">України від 26</div>
<div class="t" style="left:1044.0px;width:800px;text-align:center;top:696.20px;font-size:16px;font-weight:700;color:#000;letter-spacing:0px;font-family:'Liberation Serif', serif;">листопада 2020 року №</div>
<div class="t" style="left:1044.0px;width:800px;text-align:center;top:714.60px;font-size:16px;font-weight:700;color:#000;letter-spacing:0px;font-family:'Liberation Serif', serif;">290 (у редакції наказу</div>
<div class="t" style="left:1044.0px;width:800px;text-align:center;top:731.80px;font-size:16px;font-weight:700;color:#000;letter-spacing:0px;font-family:'Liberation Serif', serif;">Мінрегіону від 19 січня</div>
<div class="t" style="left:1044.0px;width:800px;text-align:center;top:750.40px;font-size:16px;font-weight:700;color:#000;letter-spacing:0px;font-family:'Liberation Serif', serif;">2024 року № 48)</div>
<div class="t" style="left:1183.5px;width:800px;text-align:center;top:410.60px;font-size:16px;font-weight:700;color:#000;letter-spacing:0px;font-family:'Liberation Serif', serif;">Площа</div>
<div class="t" style="left:1183.5px;width:800px;text-align:center;top:427.60px;font-size:16px;font-weight:700;color:#000;letter-spacing:0px;font-family:'Liberation Serif', serif;">земельної</div>
<div class="t" style="left:1183.5px;width:800px;text-align:center;top:454.10px;font-size:16px;font-weight:700;color:#000;letter-spacing:0px;font-family:'Liberation Serif', serif;">ділянки</div>
<div class="t" style="left:1290px;width:800px;text-align:center;top:437.54px;font-size:13.33px;font-weight:400;color:#808080;letter-spacing:0px;font-family:'Liberation Serif', serif;">НГО**</div>
<div class="t" style="left:1268px;width:800px;text-align:center;top:453.54px;font-size:13.33px;font-weight:400;color:#808080;letter-spacing:0px;font-family:'Liberation Serif', serif;">К***=</div>
<div class="t" style="left:1692px;top:454.65px;font-size:12px;font-weight:400;color:#808080;letter-spacing:0px;font-family:'Liberation Serif', serif;">0,500</div>
<div class="t" style="left:1262.5px;width:800px;text-align:center;top:476.34px;font-size:13.33px;font-weight:400;color:#808080;letter-spacing:0px;font-family:'Liberation Serif', serif;">за оди-</div>
<div class="t" style="left:1262.5px;width:800px;text-align:center;top:496.84px;font-size:13.33px;font-weight:400;color:#808080;letter-spacing:0px;font-family:'Liberation Serif', serif;">ницю</div>
<div class="t" style="left:1262.5px;width:800px;text-align:center;top:517.59px;font-size:13.33px;font-weight:400;color:#808080;letter-spacing:0px;font-family:'Liberation Serif', serif;">площі</div>
<div class="t" style="left:1317.5px;width:800px;text-align:center;top:476.34px;font-size:13.33px;font-weight:400;color:#808080;letter-spacing:0px;font-family:'Liberation Serif', serif;">за</div>
<div class="t" style="left:1317.5px;width:800px;text-align:center;top:496.84px;font-size:13.33px;font-weight:400;color:#808080;letter-spacing:0px;font-family:'Liberation Serif', serif;">площу</div>
<div class="t" style="left:1317.5px;width:800px;text-align:center;top:517.59px;font-size:13.33px;font-weight:400;color:#808080;letter-spacing:0px;font-family:'Liberation Serif', serif;">ділянки,</div>
<div class="t" style="left:1317.5px;width:800px;text-align:center;top:532.59px;font-size:13.33px;font-weight:400;color:#808080;letter-spacing:0px;font-family:'Liberation Serif', serif;">НГО</div>
<div class="t" style="left:1317.5px;width:800px;text-align:center;top:548.84px;font-size:13.33px;font-weight:400;color:#808080;letter-spacing:0px;font-family:'Liberation Serif', serif;">прове-</div>
<div class="t" style="left:1317.5px;width:800px;text-align:center;top:562.59px;font-size:13.33px;font-weight:400;color:#808080;letter-spacing:0px;font-family:'Liberation Serif', serif;">дена</div>
<div class="t" style="left:-156.5px;width:800px;text-align:center;top:809.00px;font-size:16px;font-weight:700;color:#000;letter-spacing:0px;font-family:'Liberation Serif', serif;">1</div>
<div class="t" style="left:-47.0px;width:800px;text-align:center;top:809.00px;font-size:16px;font-weight:700;color:#000;letter-spacing:0px;font-family:'Liberation Serif', serif;">2</div>
<div class="t" style="left:102.0px;width:800px;text-align:center;top:809.00px;font-size:16px;font-weight:700;color:#000;letter-spacing:0px;font-family:'Liberation Serif', serif;">3</div>
<div class="t" style="left:252.0px;width:800px;text-align:center;top:809.00px;font-size:16px;font-weight:700;color:#000;letter-spacing:0px;font-family:'Liberation Serif', serif;">4</div>
<div class="t" style="left:392.0px;width:800px;text-align:center;top:809.00px;font-size:16px;font-weight:700;color:#000;letter-spacing:0px;font-family:'Liberation Serif', serif;">5</div>
<div class="t" style="left:517.5px;width:800px;text-align:center;top:809.00px;font-size:16px;font-weight:700;color:#000;letter-spacing:0px;font-family:'Liberation Serif', serif;">6</div>
<div class="t" style="left:643.5px;width:800px;text-align:center;top:809.00px;font-size:16px;font-weight:700;color:#000;letter-spacing:0px;font-family:'Liberation Serif', serif;">7</div>
<div class="t" style="left:802.5px;width:800px;text-align:center;top:809.00px;font-size:16px;font-weight:700;color:#000;letter-spacing:0px;font-family:'Liberation Serif', serif;">8</div>
<div class="t" style="left:923.0px;width:800px;text-align:center;top:809.00px;font-size:16px;font-weight:700;color:#000;letter-spacing:0px;font-family:'Liberation Serif', serif;">9</div>
<div class="t" style="left:1044.0px;width:800px;text-align:center;top:809.00px;font-size:16px;font-weight:700;color:#000;letter-spacing:0px;font-family:'Liberation Serif', serif;">10</div>
<div class="t" style="left:1183.5px;width:800px;text-align:center;top:809.00px;font-size:16px;font-weight:700;color:#000;letter-spacing:0px;font-family:'Liberation Serif', serif;">11</div>
<div class="t" style="left:1355.5px;width:800px;text-align:center;top:888.76px;font-size:16px;font-weight:700;color:#000;letter-spacing:0px;font-family:'Liberation Sans', sans-serif;">1</div>
</div>
<div class="r" style="left:1176px;top:134px;width:263px;height:51px;background:rgba(0,0,0,.20);filter:blur(1.5px)"></div>
<div class="r" style="left:1173px;top:131px;width:264px;height:52px;background:#fff;border:1px solid #8d8d8d;box-sizing:border-box"></div>
<div class="r" style="left:1174px;top:157px;width:23px;height:25px;background:#eeeff2"></div>
<div class="r" style="left:1174px;top:132px;width:262px;height:1px;background:#fff"></div>
<div class="r" style="left:1175px;top:133px;width:260px;height:24px;background:#b5d5f2;border:1px solid #3478bc;box-sizing:border-box"></div>
<div class="r" style="left:1174px;top:131px;width:103px;height:2px;background:#eeeff2"></div>
<div class="t" style="left:1205.5px;top:139.84px;font-size:12px;font-weight:400;color:#000;letter-spacing:1.07px;font-family:'Liberation Sans', sans-serif;">Перенесення даних з J0138105</div>
<div class="t" style="left:1205.5px;top:163.84px;font-size:12px;font-weight:400;color:#000;letter-spacing:1.08px;font-family:'Liberation Sans', sans-serif;">Індексація НГО</div>
</body></html>
